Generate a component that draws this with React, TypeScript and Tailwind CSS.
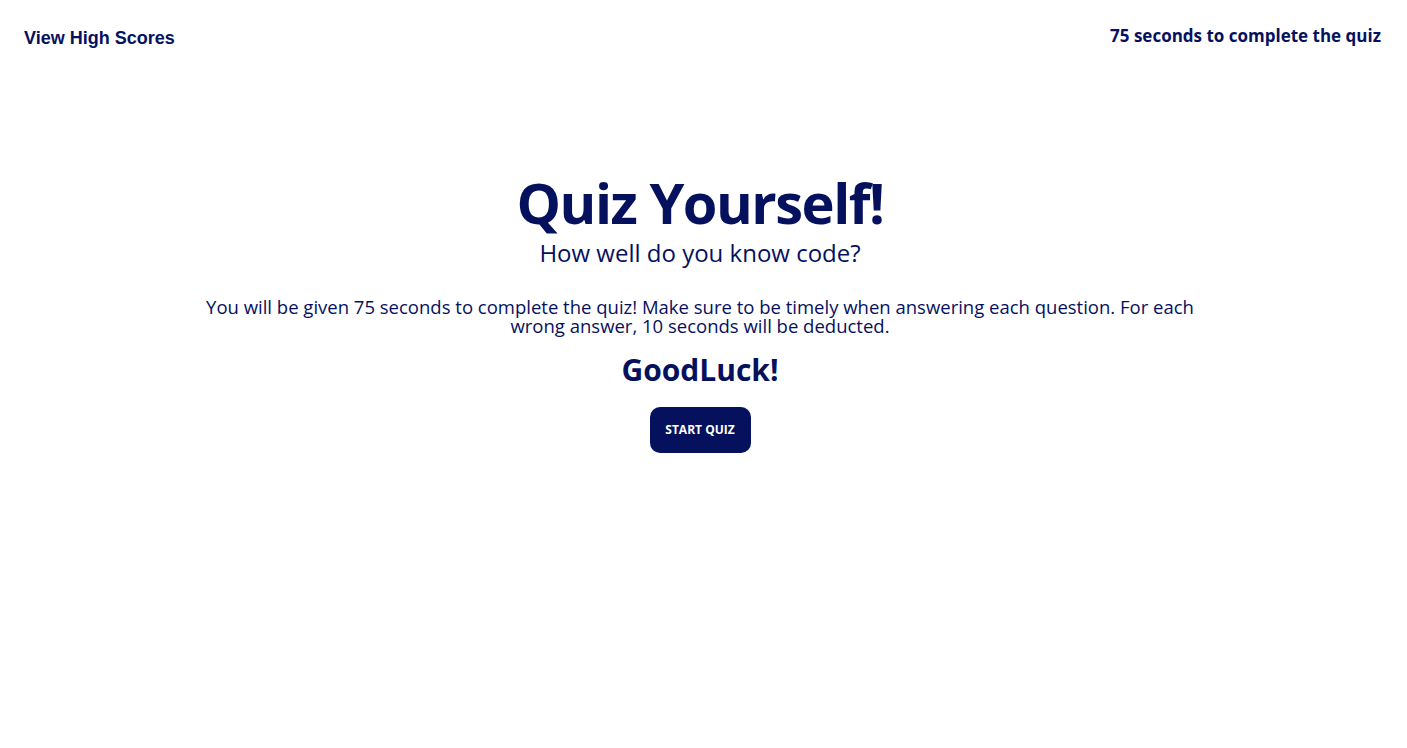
export default function App() {
  return (
    <div className="min-h-screen bg-white text-[#06115e] font-['Open_Sans',sans-serif]">
      <header className="flex items-start justify-between px-6 pt-[25px]">
        <a className="font-['Liberation_Sans',Arial,sans-serif] text-[18px] font-bold cursor-pointer">
          View High Scores
        </a>
        <div className="text-[17px] font-bold pr-[2px] -mt-[2px]">75 seconds to complete the quiz</div>
      </header>

      <main className="flex flex-col items-center text-center pr-[7px] mt-[118px]">
        <h1 className="text-[56px] font-bold leading-[64px] tracking-[-1.5px]">Quiz Yourself!</h1>
        <h2 className="text-[24px] leading-[28px] mt-[5px]">How well do you know code?</h2>
        <p className="max-w-[1000px] text-[18.5px] leading-[19px] mt-[30px]">
          You will be given 75 seconds to complete the quiz! Make sure to be timely when answering each question. For each wrong answer, 10 seconds will be deducted.
        </p>
        <h3 className="text-[30px] font-bold leading-[36px] mt-[17px]">GoodLuck!</h3>
        <button className="mt-[19px] h-[46px] w-[101px] rounded-[10px] bg-[#06115e] text-white text-[12px] font-bold">
          START QUIZ
        </button>
      </main>
    </div>
  );
}
